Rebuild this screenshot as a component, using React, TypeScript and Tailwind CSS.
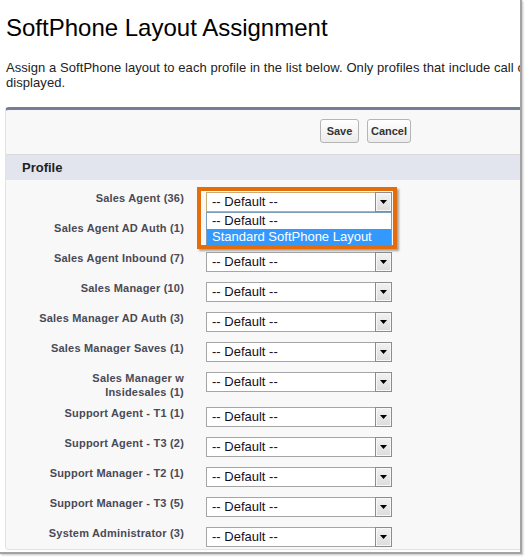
const profiles = [
  "Sales Agent (36)",
  "Sales Agent AD Auth (1)",
  "Sales Agent Inbound (7)",
  "Sales Manager (10)",
  "Sales Manager AD Auth (3)",
  "Sales Manager Saves (1)",
  "Sales Manager w\nInsidesales (1)",
  "Support Agent - T1 (1)",
  "Support Agent - T3 (2)",
  "Support Manager - T2 (1)",
  "Support Manager - T3 (5)",
  "System Administrator (3)",
];

const Arrow = () => (
  <span className="-my-px -mr-px flex h-[20px] w-[17px] items-center justify-center border border-[#8c8c8c] bg-linear-to-b from-[#f2f2f2] to-[#dcdcdc] shadow-[inset_0_0_0_1px_#f7f7f7]">
    <svg width="7" height="4" viewBox="0 0 7 4">
      <polygon points="0,0 7,0 3.5,4" fill="#000" />
    </svg>
  </span>
);

const Select = ({ open }: { open?: boolean }) => (
  <div className="relative h-[20px] w-[186px]">
    <div
      className={
        open
          ? "flex h-full border border-[#c9ad74] bg-white"
          : "flex h-full border border-[#a5a5a5] bg-white"
      }
    >
      <span className="flex-1 pl-[5px] text-[13px] leading-[18px] text-[#140f1e]">
        -- Default --
      </span>
      <Arrow />
    </div>
    {open && (
      <>
        {/* open dropdown list */}
        <div className="absolute left-0 top-[20px] z-10 w-[186px] border border-[#7f9db9] bg-white text-[13px] leading-[16px]">
          <div className="h-[16px] pl-[5px] text-[#140f1e]">-- Default --</div>
          <div className="h-[16px] bg-[#3399ff] pl-[5px] text-white">Standard SoftPhone Layout</div>
        </div>
        {/* orange callout */}
        <div className="pointer-events-none absolute left-[-9px] top-[-5px] z-20 h-[62px] w-[200px] border-4 border-[#e46c0a] shadow-[2px_2px_2px_rgba(0,0,0,0.35)]" />
      </>
    )}
  </div>
);

export default function App() {
  return (
    <div className="h-[559px] w-[526px] overflow-hidden bg-white font-['Liberation_Sans',Arial,sans-serif]">
      <div className="h-[554px] w-[522px] overflow-hidden border-b-2 border-r-2 border-[#a3a3a3] shadow-[1px_1px_2px_rgba(0,0,0,0.25)]">
        <h1 className="whitespace-nowrap pl-[6px] pt-[13px] text-[24px] leading-[29px] text-black">
          SoftPhone Layout Assignment
        </h1>
        <p className="mt-[18px] whitespace-nowrap pl-[6px] text-[13px] leading-[15px] tracking-[0.06px] text-[#222]">
          Assign a SoftPhone layout to each profile in the list below. Only profiles that include call center users are
          <br />
          displayed.
        </p>

        <div className="ml-[5px] mt-[17px] w-[540px] rounded-[4px] border-b border-l border-t-[3px] border-b-[#e0e3e5] border-l-[#e0e3e5] border-t-[#747e96] bg-[#f8f8f8]">
          <div className="flex h-[45px] gap-[8px] border-b border-[#dbdbdb] pl-[314px] pt-[9px]">
            <button className="h-[24px] w-[39px] rounded-[3px] border border-[#b5b5b5] bg-linear-to-b from-white to-[#ececec] text-[11px] font-bold text-[#333]">
              Save
            </button>
            <button className="h-[24px] w-[44px] rounded-[3px] border border-[#b5b5b5] bg-linear-to-b from-white to-[#ececec] text-[11px] font-bold text-[#333]">
              Cancel
            </button>
          </div>
          <div className="h-[25px] bg-[#e2e5ee] pl-[16px] text-[13px] font-bold leading-[25px] text-[#222]">
            Profile
          </div>
          <div className="pt-[7px]">
            {profiles.map((p, i) => (
              <div key={p} className="flex items-start gap-[22px]">
                <div className="mb-[3px] mt-[4px] w-[178px] whitespace-pre-line text-right text-[11px] font-bold leading-[14px] tracking-[0.2px] text-[#4a4a56]">
                  {p}
                </div>
                <div className={i === profiles.length - 1 ? "mb-[2px] mt-[5px]" : "mb-[5px] mt-[5px]"}>
                  <Select open={i === 0} />
                </div>
              </div>
            ))}
          </div>
        </div>
      </div>
    </div>
  );
}
